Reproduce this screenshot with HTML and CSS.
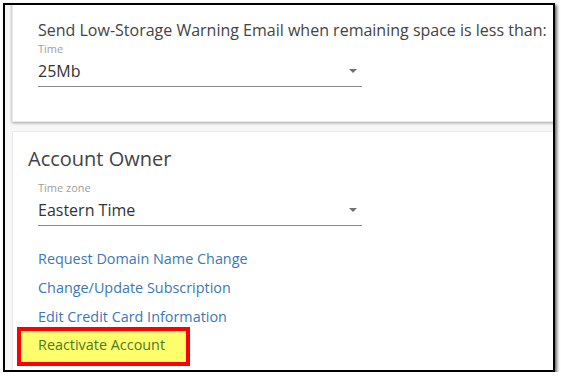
FILE: index.html
```html
<!DOCTYPE html>
<html lang="en">
<head>
  <meta charset="UTF-8">
  <title>Account Settings</title>
  <link rel="stylesheet" href="styles.css">
</head>
<body>
  <div class="frame">
    <div class="card card-storage">
      <div class="indent">
        <div class="card-text">Send Low-Storage Warning Email when remaining space is less than:</div>
        <div class="field">
          <div class="field-label">Time</div>
          <div class="field-select">
            <span>25Mb</span>
            <span class="caret"></span>
          </div>
        </div>
      </div>
    </div>

    <div class="card card-owner">
      <h3 class="card-title">Account Owner</h3>
      <div class="indent">
        <div class="field field-tz">
          <div class="field-label">Time zone</div>
          <div class="field-select">
            <span>Eastern Time</span>
            <span class="caret"></span>
          </div>
        </div>
        <div class="links">
          <a class="link" href="#">Request Domain Name Change</a>
          <a class="link" href="#">Change/Update Subscription</a>
          <a class="link" href="#">Edit Credit Card Information</a>
          <div class="marked">
            <a class="link" href="#">Reactivate Account</a>
          </div>
        </div>
      </div>
    </div>
  </div>
</body>
</html>
```

FILE: styles.css
```css
html, body {
  margin: 0;
  background: #fff;
  font-family: 'Open Sans', 'Liberation Sans', sans-serif;
}
.frame {
  margin: 3px 0 0 3px;
  width: 548px;
  height: 365px;
  border: 2px solid #000;
  box-shadow: 2px 2px 3px rgba(0,0,0,0.6);
  background: #f7f7f7;
  overflow: hidden;
}
.card {
  background: #fff;
  border: 1px solid #e9e9e9;
  margin: 0 -30px 0 7px;
  padding: 0 15px;
}
.card-storage {
  margin-top: -12px;
  padding-top: 26px;
  padding-bottom: 34px;
  box-shadow: 0 1px 3px rgba(0,0,0,0.35);
}
.card-owner {
  margin-top: 9px;
  padding-top: 14px;
  height: 300px;
}
.indent {
  padding-left: 10px;
}
.card-text {
  font-size: 16px;
  line-height: 20px;
  color: #444;
}
.card-title {
  margin: 0;
  font-size: 20px;
  font-weight: 400;
  line-height: 26px;
  color: #444;
}
.field {
  width: 324px;
  margin-top: 3px;
}
.field-tz {
  margin-top: 10px;
}
.field-label {
  font-size: 11px;
  line-height: 12px;
  color: #9e9e9e;
}
.field-select {
  display: flex;
  justify-content: space-between;
  align-items: center;
  margin-top: 5px;
  padding-bottom: 4px;
  border-bottom: 1px solid #8a8a8a;
  font-size: 16px;
  line-height: 22px;
  color: #333;
}
.caret {
  width: 0;
  height: 0;
  margin-right: 5px;
  border-left: 4px solid transparent;
  border-right: 4px solid transparent;
  border-top: 4px solid #707070;
}
.links {
  margin-top: 18px;
}
.link {
  display: block;
  font-size: 14.4px;
  line-height: 29px;
  color: #3b78b5;
  text-decoration: none;
}
.marked {
  display: inline-block;
  margin: -4px 0 0 -21px;
  padding: 0 21px 4px 17px;
  border: 4px solid #f00;
  background: #ffff6e;
}
.marked .link {
  line-height: 27px;
  color: #4b7a26;
}
```
